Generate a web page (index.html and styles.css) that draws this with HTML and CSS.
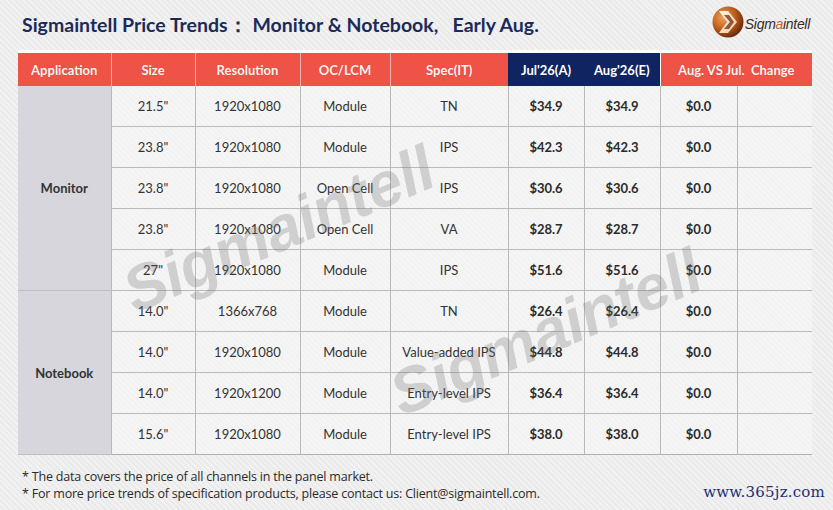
FILE: index.html
```html
<!DOCTYPE html>
<html>
<head>
<meta charset="utf-8">
<link rel="stylesheet" href="styles.css">
</head>
<body>
<div class="page">
  <div class="top">
    <h1 class="title">Sigmaintell Price Trends：&nbsp;Monitor &amp; Notebook,&nbsp;&nbsp; Early Aug.</h1>
    <div class="logo">
      <svg class="logo-mark" width="32" height="32" viewBox="-16 -16 32 32">
        <defs>
          <radialGradient id="lg" cx="0.35" cy="0.35" r="0.75">
            <stop offset="0" stop-color="#f3a35a"/>
            <stop offset="0.5" stop-color="#c0601e"/>
            <stop offset="1" stop-color="#5a200c"/>
          </radialGradient>
          <linearGradient id="cg" x1="0" y1="0" x2="1" y2="1">
            <stop offset="0" stop-color="#fff6e6"/>
            <stop offset="1" stop-color="#e9c9a0"/>
          </linearGradient>
        </defs>
        <circle r="15.5" fill="url(#lg)"/>
        <path d="M-9,-11 L0,-11 L9,0 L0,11 L-9,11 L-1,0 Z" fill="url(#cg)"/>
        <path d="M-4,-7 L1,-7 L6,0 L1,7 L-4,7 L2,0 Z" fill="#7a3412" opacity="0.8"/>
      </svg>
      <span class="logo-text">Sigm<span class="logo-a">a</span>intell</span>
    </div>
  </div>

  <div class="table-wrap">
    <table class="prices">
      <colgroup>
        <col class="c-app"><col class="c-size"><col class="c-res"><col class="c-oc"><col class="c-spec"><col class="c-jul"><col class="c-aug"><col class="c-chg"><col class="c-empty">
      </colgroup>
      <thead>
        <tr>
          <th class="red">Application</th>
          <th class="red">Size</th>
          <th class="red">Resolution</th>
          <th class="red">OC/LCM</th>
          <th class="red">Spec(IT)</th>
          <th class="navy">Jul'26(A)</th>
          <th class="navy">Aug'26(E)</th>
          <th class="red" colspan="2">Aug. VS Jul.&nbsp; Change</th>
        </tr>
      </thead>
      <tbody>
        <tr><td class="app" rowspan="5">Monitor</td><td>21.5"</td><td>1920x1080</td><td>Module</td><td>TN</td><td class="num">$34.9</td><td class="num">$34.9</td><td class="num">$0.0</td><td></td></tr>
        <tr><td>23.8"</td><td>1920x1080</td><td>Module</td><td>IPS</td><td class="num">$42.3</td><td class="num">$42.3</td><td class="num">$0.0</td><td></td></tr>
        <tr><td>23.8"</td><td>1920x1080</td><td>Open Cell</td><td>IPS</td><td class="num">$30.6</td><td class="num">$30.6</td><td class="num">$0.0</td><td></td></tr>
        <tr><td>23.8"</td><td>1920x1080</td><td>Open Cell</td><td>VA</td><td class="num">$28.7</td><td class="num">$28.7</td><td class="num">$0.0</td><td></td></tr>
        <tr><td>27"</td><td>1920x1080</td><td>Module</td><td>IPS</td><td class="num">$51.6</td><td class="num">$51.6</td><td class="num">$0.0</td><td></td></tr>
        <tr><td class="app" rowspan="4">Notebook</td><td>14.0"</td><td>1366x768</td><td>Module</td><td>TN</td><td class="num">$26.4</td><td class="num">$26.4</td><td class="num">$0.0</td><td></td></tr>
        <tr><td>14.0"</td><td>1920x1080</td><td>Module</td><td>Value-added IPS</td><td class="num">$44.8</td><td class="num">$44.8</td><td class="num">$0.0</td><td></td></tr>
        <tr><td>14.0"</td><td>1920x1200</td><td>Module</td><td>Entry-level IPS</td><td class="num">$36.4</td><td class="num">$36.4</td><td class="num">$0.0</td><td></td></tr>
        <tr><td>15.6"</td><td>1920x1080</td><td>Module</td><td>Entry-level IPS</td><td class="num">$38.0</td><td class="num">$38.0</td><td class="num">$0.0</td><td></td></tr>
      </tbody>
    </table>
    <div class="wm wm1">Sigmaintell</div>
    <div class="wm wm2">Sigmaintell</div>
  </div>

  <div class="foot">
    <div class="notes">
      <p>* The data covers the price of all channels in the panel market.</p>
      <p>* For more price trends of specification products, please contact us: Client@sigmaintell.com.</p>
    </div>
    <div class="site">www.365jz.com</div>
  </div>
</div>
</body>
</html>
```

FILE: styles.css
```css
html, body {
  margin: 0;
  padding: 0;
}
body {
  background: #eeeeee;
  font-family: Lato, "Open Sans", "Liberation Sans", sans-serif;
  color: #2a2a2a;
  width: 833px;
  height: 510px;
  overflow: hidden;
}
.page {
  width: 833px;
  height: 510px;
  box-sizing: border-box;
  background:
    repeating-linear-gradient(45deg, rgba(255,255,255,0.25) 0 2px, rgba(0,0,0,0.015) 2px 4px),
    #eeeeee;
}
.top {
  display: flex;
  justify-content: space-between;
  align-items: flex-start;
  height: 47px;
  padding: 0 23px 0 22px;
  box-sizing: border-box;
}
.title {
  margin: 0;
  padding-top: 12px;
  font-size: 19.5px;
  font-weight: 700;
  color: #1c2a5a;
  letter-spacing: 0;
  white-space: nowrap;
}
.logo {
  display: flex;
  align-items: center;
  padding-top: 6px;
  gap: 1px;
}
.logo-mark {
  display: block;
}
.logo-text {
  font-family: "Liberation Sans", sans-serif;
  font-style: italic;
  font-size: 14px;
  letter-spacing: -0.3px;
  color: #3b2a22;
  margin-top: 3px;
}
.logo-a {
  color: #c8641f;
}
.table-wrap {
  position: relative;
  margin-left: 18px;
  margin-top: 3px;
  width: 794px;
  border-top: 3px solid #ffffff;
}
.prices {
  border-collapse: collapse;
  table-layout: fixed;
  width: 794px;
  font-size: 13px;
}
.c-app { width: 93px; }
.c-size { width: 84px; }
.c-res { width: 105px; }
.c-oc { width: 90px; }
.c-spec { width: 118px; }
.c-jul { width: 76px; }
.c-aug { width: 76px; }
.c-chg { width: 77px; }
.c-empty { width: 75px; }
.prices th {
  height: 33px;
  padding: 0;
  font-weight: 700;
  font-size: 13px;
  color: #fff4ef;
  text-shadow: 0 0 1px rgba(120,20,10,0.35);
  border-left: 1px solid #f7b3ad;
}
.prices th:first-child {
  border-left: none;
}
.prices th.red {
  background: #ef5348;
}
.prices th.navy {
  background: #0f2461;
  color: #ffffff;
  border-left: none;
  text-shadow: none;
}
.prices th.navy + th.red {
  border-left: 1px solid #ffffff;
}
.prices td {
  height: 40px;
  padding: 0;
  text-align: center;
  color: #333333;
  border: 1px solid #b9b9b9;
  background: rgba(248,248,248,0.55);
}
.prices tbody tr:last-child td {
  border-bottom: 1px solid #b0b0b0;
}
.prices td:last-child {
  border-right: none;
}
.prices td.num {
  font-weight: 700;
  color: #2b2b2b;
}
.prices td.app {
  background: #d6d6dc;
  font-weight: 700;
  color: #333;
  border-left: none;
  border-top: none;
  border-bottom: 1px solid #bdbdc4;
}
.prices tbody tr:first-child td {
  border-top: none;
}
.wm {
  position: absolute;
  font-family: "Liberation Sans", sans-serif;
  font-weight: 700;
  font-style: italic;
  font-size: 63px;
  color: rgba(110,110,110,0.27);
  transform: rotate(-23deg);
  transform-origin: center center;
  white-space: nowrap;
  pointer-events: none;
  letter-spacing: -0.5px;
}
.wm1 {
  left: 95px;
  top: 140px;
}
.wm2 {
  left: 362px;
  top: 243px;
}
.foot {
  display: flex;
  justify-content: space-between;
  align-items: flex-end;
  padding: 13px 8px 0 22px;
}
.notes p {
  margin: 0;
  font-family: "Open Sans", "Liberation Sans", sans-serif;
  font-size: 12.5px;
  line-height: 17px;
  color: #2a2a2a;
  letter-spacing: -0.2px;
}
.site {
  font-family: "DejaVu Serif", serif;
  font-size: 15px;
  color: #1f2f75;
  line-height: 20px;
  letter-spacing: 0.2px;
}
```
